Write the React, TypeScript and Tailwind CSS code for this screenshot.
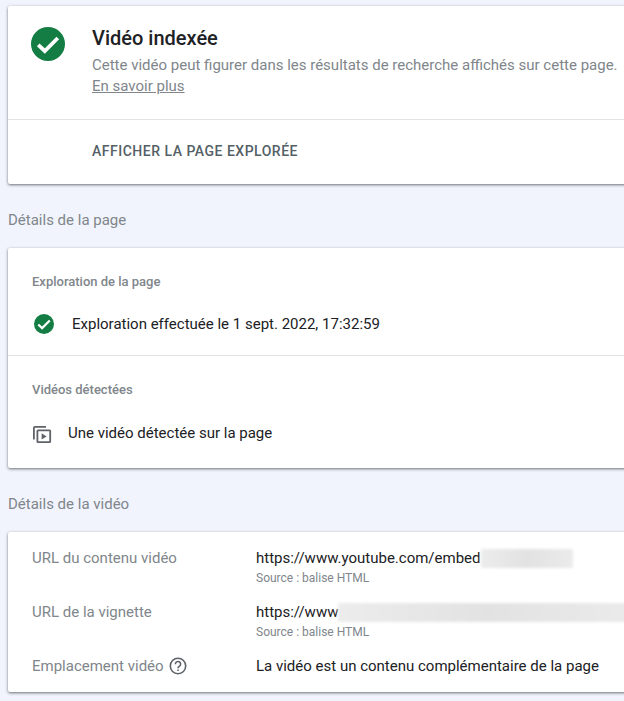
import React from "react";

const font = { fontFamily: "Roboto, sans-serif" };

function Check({ size }: { size: number }) {
  return (
    <svg width={size} height={size} viewBox="0 0 34 34" className="shrink-0">
      <circle cx="17" cy="17" r="17" fill="#137d43" />
      <path d="M7.2 17.8 L13.8 24 L26.8 11" fill="none" stroke="#fff" strokeWidth="3.8" />
    </svg>
  );
}

function Smudge({ className }: { className: string }) {
  return <span className={"block h-[19px] bg-gradient-to-r from-[#ececec] via-[#e2e2e2] to-[#ebebeb] blur-[1.5px] " + className} />;
}

function Row({ label, children }: { label: React.ReactNode; children: React.ReactNode }) {
  return (
    <div className="flex">
      <div className="w-[224px] shrink-0 text-[15px] leading-[20px] text-[#80868b]">{label}</div>
      <div className="min-w-0">{children}</div>
    </div>
  );
}

export default function App() {
  return (
    <div className="w-[624px] h-[701px] overflow-hidden bg-[#f1f4fd] pt-[6px] pl-2" style={font}>
      <div className="w-[640px] h-[178px] bg-white rounded-[2px] shadow-[0_1px_3px_rgba(60,64,67,0.75)] flex flex-col">
        <div className="h-[114px] shrink-0 flex pl-[23px] pt-[21px] border-b border-[#e3e3e3]">
          <Check size={34} />
          <div className="ml-[27px]">
            <div className="text-[20px] leading-[24px] font-medium text-[#202124] mt-[-1px]">Vidéo indexée</div>
            <div className="mt-[5px] text-[15px] leading-[20px] text-[#80868b] whitespace-nowrap">
              Cette vidéo peut figurer dans les résultats de recherche affichés sur cette page.
            </div>
            <div className="mt-[1px] text-[15px] leading-[20px] text-[#80868b] underline">En savoir plus</div>
          </div>
        </div>
        <div className="pl-[84px] pt-[22px] text-[14px] leading-[18px] font-medium text-[#545f66] tracking-[0.5px]">
          AFFICHER LA PAGE EXPLORÉE
        </div>
      </div>

      <div className="h-[64px] pt-[26px] text-[15px] leading-[20px] text-[#80868b]">Détails de la page</div>

      <div className="w-[640px] h-[220px] bg-white rounded-[2px] shadow-[0_1px_3px_rgba(60,64,67,0.75)]">
        <div className="h-[108px] border-b border-[#e3e3e3] pl-6 pt-[26px]">
          <div className="text-[13px] leading-[16px] font-medium text-[#80868b]">Exploration de la page</div>
          <div className="flex items-center mt-[24px]">
            <span className="ml-[2px]"><Check size={20} /></span>
            <span className="ml-[18px] text-[15px] leading-[20px] text-[#202124]">Exploration effectuée le 1 sept. 2022, 17:32:59</span>
          </div>
        </div>
        <div className="pl-6 pt-[26px]">
          <div className="text-[13px] leading-[16px] font-medium text-[#80868b]">Vidéos détectées</div>
          <div className="flex items-center mt-[23px]">
            <svg width="20" height="20" viewBox="0 0 20 20" className="shrink-0 mt-[3px]" fill="none" stroke="#5f6368" strokeWidth="1.8">
              <path d="M1.9 15.5V3.8A1 1 0 0 1 2.9 2.9H14" />
              <rect x="5.4" y="6.4" width="12.8" height="11.8" rx="0.6" />
              <path d="M9.6 9.2v6.4l5-3.2z" fill="#5f6368" stroke="none" />
            </svg>
            <span className="ml-[16px] text-[15px] leading-[20px] text-[#202124]">Une vidéo détectée sur la page</span>
          </div>
        </div>
      </div>

      <div className="h-[64px] pt-[26px] text-[15px] leading-[20px] text-[#80868b]">Détails de la vidéo</div>

      <div className="w-[640px] h-[160px] bg-white rounded-[2px] shadow-[0_1px_3px_rgba(60,64,67,0.75)] pl-6 pt-4">
        <Row label="URL du contenu vidéo">
          <div className="flex items-center text-[15px] leading-[20px] text-[#202124]">
            https://www.youtube.com/embed<Smudge className="w-[92px]" />
          </div>
          <div className="text-[12px] leading-[14px] mt-[3px] text-[#80868b]">Source : balise HTML</div>
        </Row>
        <div className="h-[17px]" />
        <Row label="URL de la vignette">
          <div className="flex items-center text-[15px] leading-[20px] text-[#202124] whitespace-nowrap">
            https://www<Smudge className="w-[300px]" />
          </div>
          <div className="text-[12px] leading-[14px] mt-[3px] text-[#80868b]">Source : balise HTML</div>
        </Row>
        <div className="h-[17px]" />
        <Row
          label={
            <span className="flex items-center">
              Emplacement vidéo
              <svg width="18" height="18" viewBox="0 0 18 18" className="ml-[5px]" fill="none" stroke="#5f6368" strokeWidth="1.6">
                <circle cx="9" cy="9" r="7.7" />
                <path d="M6.4 7.2a2.6 2.6 0 1 1 4.1 2c-.9.6-1.5 1-1.5 2.1" />
                <path d="M9 12.4v1.6" />
              </svg>
            </span>
          }
        >
          <div className="text-[15px] leading-[20px] text-[#202124] whitespace-nowrap">La vidéo est un contenu complémentaire de la page</div>
        </Row>
      </div>
    </div>
  );
}
